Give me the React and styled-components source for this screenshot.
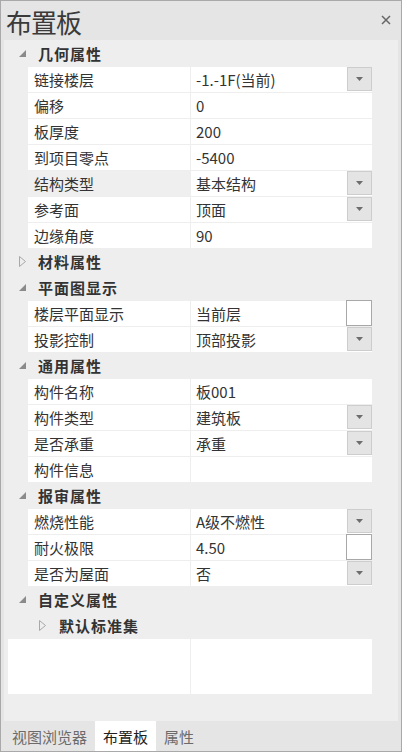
import React from "react";
import styled, { createGlobalStyle } from "styled-components";

const GlobalStyle = createGlobalStyle`
  html, body {
    margin: 0;
    padding: 0;
    background: #ffffff;
  }
  body {
    font-family: "Noto Sans CJK SC", "Noto Sans", sans-serif;
  }
`;

const Window = styled.div`
  width: 402px;
  height: 752px;
  box-sizing: border-box;
  border: 1px solid #a9a9a9;
  background: #e5e5e5;
  display: flex;
  flex-direction: column;
  overflow: hidden;
`;

const TitleBar = styled.div`
  height: 39px;
  display: flex;
  align-items: center;
  justify-content: space-between;
  padding: 0 8px 0 5px;
  flex-shrink: 0;
`;

const Title = styled.h1`
  margin: 0;
  font-size: 26px;
  font-weight: 400;
  line-height: 1;
  color: #3a3a3a;
  letter-spacing: -1px;
  padding-top: 2px;
`;

const CloseButton = styled.button`
  width: 14px;
  height: 14px;
  padding: 0;
  border: none;
  background: none;
  display: flex;
  align-items: center;
  justify-content: center;
  margin-top: -2px;
`;

const Panel = styled.div`
  flex: 1;
  margin: 0 3px;
  background: #eeeeee;
  overflow: hidden;
`;

const SectionHeader = styled.div`
  height: 26px;
  display: flex;
  align-items: center;
  padding-left: ${(p) => (p.$nested ? 35 : 15)}px;
  gap: ${(p) => (p.$nested ? 13 : 12)}px;
  font-size: 15px;
  font-weight: 700;
  letter-spacing: 1px;
  color: #333333;
`;

const Toggle = styled.span`
  width: 7px;
  height: 10px;
  display: flex;
  align-items: center;
  justify-content: center;
`;

const Row = styled.div`
  display: grid;
  grid-template-columns: 162px 181px;
  column-gap: 1px;
  margin: 1px 0 0 24px;
  height: 25px;
  font-size: 15px;
  color: #333333;
`;

const Label = styled.div`
  background: ${(p) => (p.$selected ? "#efefef" : "#ffffff")};
  display: flex;
  align-items: center;
  padding-left: 6px;
  white-space: nowrap;
`;

const Value = styled.div`
  background: #ffffff;
  display: flex;
  align-items: center;
  justify-content: space-between;
  padding-left: 5px;
  white-space: nowrap;
`;

const DropButton = styled.span`
  width: 25px;
  height: 24px;
  box-sizing: border-box;
  align-self: flex-start;
  border: 1px solid #cdcdcd;
  background: #e4e4e4;
  display: flex;
  align-items: center;
  justify-content: center;
`;

const EditBox = styled.span`
  width: 26px;
  height: 26px;
  box-sizing: border-box;
  align-self: flex-start;
  margin-top: -1px;
  border: 1px solid #a8a8a8;
  background: #ffffff;
`;

const Blank = styled.div`
  display: grid;
  grid-template-columns: 182px 181px;
  column-gap: 1px;
  margin: 1px 0 0 4px;
  height: 55px;

  & > div {
    background: #ffffff;
  }
`;

const TabBar = styled.div`
  height: 30px;
  display: flex;
  align-items: stretch;
  padding-left: 3px;
  flex-shrink: 0;
`;

const Tab = styled.div`
  padding: 0 8px;
  display: flex;
  align-items: center;
  font-size: 15px;
  background: ${(p) => (p.$active ? "#ffffff" : "transparent")};
  color: ${(p) => (p.$active ? "#1e1e1e" : "#6b6b6b")};
`;

const Arrow = () => (
  <svg width="7" height="4" viewBox="0 0 7 4">
    <polygon points="0,0 7,0 3.5,4" fill="#6d6d6d" />
  </svg>
);

const Expanded = () => (
  <svg width="7" height="7" viewBox="0 0 7 7">
    <polygon points="7,0 7,7 0,7" fill="#8a8a8a" />
  </svg>
);

const Collapsed = () => (
  <svg width="7" height="11" viewBox="0 0 7 11">
    <polygon points="0.5,0.5 6.5,5.5 0.5,10.5" fill="none" stroke="#a8a8a8" strokeWidth="1" />
  </svg>
);

const sections = [
  {
    title: "几何属性",
    open: true,
    rows: [
      { label: "链接楼层", value: "-1.-1F(当前)", kind: "drop" },
      { label: "偏移", value: "0" },
      { label: "板厚度", value: "200" },
      { label: "到项目零点", value: "-5400" },
      { label: "结构类型", value: "基本结构", kind: "drop", selected: true },
      { label: "参考面", value: "顶面", kind: "drop" },
      { label: "边缘角度", value: "90" },
    ],
  },
  { title: "材料属性", open: false, rows: [] },
  {
    title: "平面图显示",
    open: true,
    rows: [
      { label: "楼层平面显示", value: "当前层", kind: "box" },
      { label: "投影控制", value: "顶部投影", kind: "drop" },
    ],
  },
  {
    title: "通用属性",
    open: true,
    rows: [
      { label: "构件名称", value: "板001" },
      { label: "构件类型", value: "建筑板", kind: "drop" },
      { label: "是否承重", value: "承重", kind: "drop" },
      { label: "构件信息", value: "" },
    ],
  },
  {
    title: "报审属性",
    open: true,
    rows: [
      { label: "燃烧性能", value: "A级不燃性", kind: "drop" },
      { label: "耐火极限", value: "4.50", kind: "box" },
      { label: "是否为屋面", value: "否", kind: "drop" },
    ],
  },
];

const PropRow = ({ row }) => (
  <Row>
    <Label $selected={row.selected}>{row.label}</Label>
    <Value>
      <span>{row.value}</span>
      {row.kind === "drop" && (
        <DropButton>
          <Arrow />
        </DropButton>
      )}
      {row.kind === "box" && <EditBox />}
    </Value>
  </Row>
);

const App = () => {
  return (
    <>
      <GlobalStyle />
      <Window>
        <TitleBar>
          <Title>布置板</Title>
          <CloseButton aria-label="关闭">
            <svg width="10" height="10" viewBox="0 0 10 10">
              <path d="M1 1 L9 9 M9 1 L1 9" stroke="#666" strokeWidth="1.5" />
            </svg>
          </CloseButton>
        </TitleBar>
        <Panel>
          {sections.map((s) => (
            <React.Fragment key={s.title}>
              <SectionHeader>
                <Toggle>{s.open ? <Expanded /> : <Collapsed />}</Toggle>
                {s.title}
              </SectionHeader>
              {s.rows.map((r) => (
                <PropRow key={r.label} row={r} />
              ))}
            </React.Fragment>
          ))}
          <SectionHeader>
            <Toggle>
              <Expanded />
            </Toggle>
            自定义属性
          </SectionHeader>
          <SectionHeader $nested>
            <Toggle>
              <Collapsed />
            </Toggle>
            默认标准集
          </SectionHeader>
          <Blank>
            <div />
            <div />
          </Blank>
        </Panel>
        <TabBar>
          <Tab>视图浏览器</Tab>
          <Tab $active>布置板</Tab>
          <Tab>属性</Tab>
        </TabBar>
      </Window>
    </>
  );
};

export default App;
